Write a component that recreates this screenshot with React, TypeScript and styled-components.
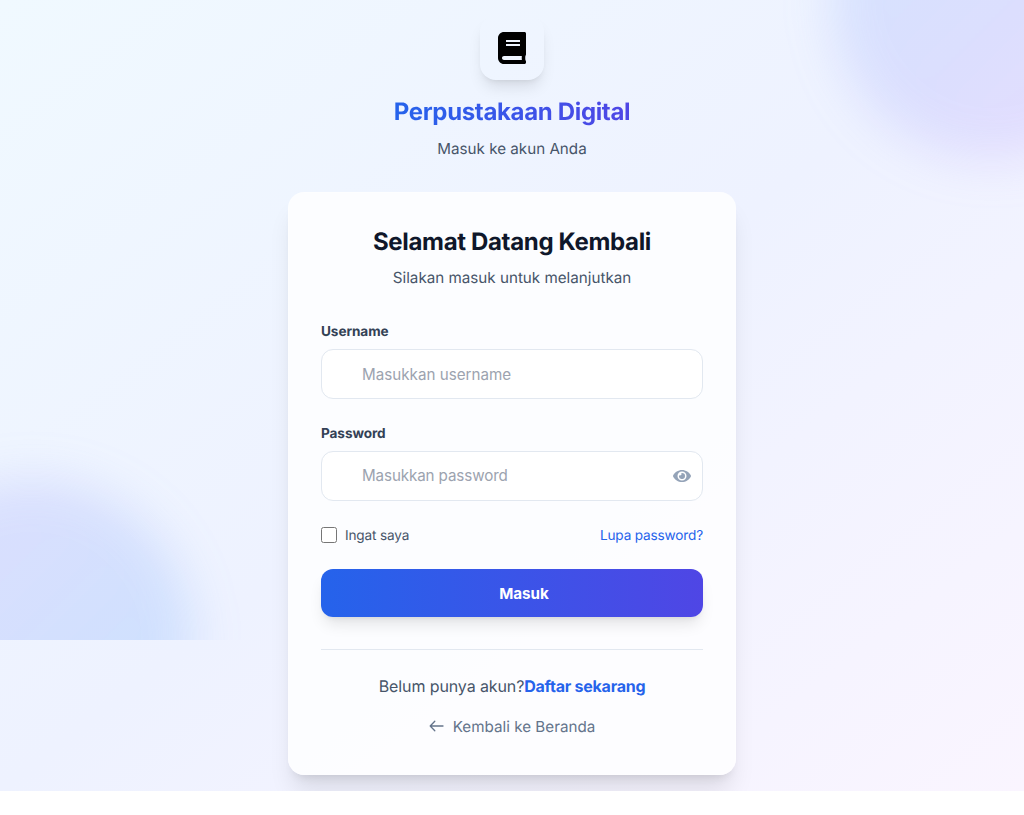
import React, { useState } from "react";
import styled, { createGlobalStyle } from "styled-components";
import { FaBook, FaEye } from "react-icons/fa";

const GlobalStyle = createGlobalStyle`
  *, *::before, *::after { box-sizing: border-box; }
  body {
    margin: 0;
    background: #fff;
    font-family: Inter, sans-serif;
    font-size: 16px;
    font-weight: 375;
    line-height: 24px;
    color: #0f172a;
    text-rendering: geometricPrecision;
    -webkit-font-smoothing: antialiased;
  }
  h1, h2, p { margin: 0; }
  a { text-decoration: none; }
`;

const Page = styled.div`
  position: relative;
  height: 791px;
  padding: 16px;
  display: flex;
  flex-direction: column;
  align-items: center;
  background: linear-gradient(to bottom right, #f0f9ff, #eef2ff, #faf5ff);
`;

const Backdrop = styled.div`
  position: absolute;
  top: 0;
  left: 0;
  right: 0;
  height: 640px;
  overflow: hidden;
  pointer-events: none;
`;

const Blob = styled.div<{ $corner: "top" | "bottom" }>`
  position: absolute;
  width: 320px;
  height: 320px;
  border-radius: 50%;
  filter: blur(24px);
  ${(p) =>
    p.$corner === "top"
      ? `top: -160px; right: -128px;
         background: linear-gradient(to bottom right, rgba(96, 165, 250, 0.2), rgba(192, 132, 252, 0.2));`
      : `bottom: -160px; left: -128px;
         background: linear-gradient(to bottom right, rgba(129, 140, 248, 0.2) 30%, rgba(88, 156, 250, 0.2) 70%);`}
`;

const Content = styled.main`
  position: relative;
  width: 448px;
`;

const Header = styled.header`
  display: flex;
  flex-direction: column;
  align-items: center;
  margin-bottom: 31px;
`;

const Logo = styled.div`
  display: flex;
  align-items: center;
  justify-content: center;
  width: 64px;
  height: 64px;
  margin-bottom: 16px;
  border-radius: 16px;
  font-size: 32px;
  color: #000;
  box-shadow: 0 10px 15px -3px rgba(0, 0, 0, 0.1), 0 4px 6px -4px rgba(0, 0, 0, 0.1);
`;

const Brand = styled.h1`
  font-size: 24px;
  line-height: 32px;
  font-weight: 700;
  letter-spacing: -0.34px;
  color: transparent;
  background: linear-gradient(to right, #2563eb, #4f46e5);
  background-clip: text;
  -webkit-background-clip: text;
`;

const Subtitle = styled.p`
  margin-top: 9px;
  font-size: 15.2px;
  color: #475569;
`;

const Card = styled.section`
  padding: 32px 32px 35px;
  border: 1px solid rgba(255, 255, 255, 0.2);
  border-radius: 16px;
  background: rgba(255, 255, 255, 0.8);
  box-shadow: 0 20px 25px -5px rgba(0, 0, 0, 0.1), 0 8px 10px -6px rgba(0, 0, 0, 0.1);
`;

const CardHead = styled.div`
  text-align: center;
  margin-bottom: 31px;
`;

const Title = styled.h2`
  padding-top: 1px;
  font-size: 24px;
  line-height: 31px;
  font-weight: 700;
  letter-spacing: -0.34px;
`;

const Form = styled.form`
  display: flex;
  flex-direction: column;
  gap: 24px;
`;

const Field = styled.div`
  display: flex;
  flex-direction: column;
  gap: 7px;
`;

const Label = styled.label`
  padding-top: 1px;
  font-size: 13.6px;
  line-height: 20px;
  font-weight: 650;
  letter-spacing: -0.08px;
  color: #334155;
`;

const InputBox = styled.div`
  display: flex;
  align-items: center;
  height: 50px;
  padding: 0 11px 0 40px;
  border: 1px solid #e2e8f0;
  border-radius: 12px;
  background: rgba(255, 255, 255, 0.8);
`;

const Input = styled.input<{ $drop?: number; $tracking?: number }>`
  flex: 1;
  min-width: 0;
  padding: ${(p) => p.$drop ?? 0}px 0 0;
  border: 0;
  outline: 0;
  background: transparent;
  font: inherit;
  font-size: 15.2px;
  letter-spacing: ${(p) => p.$tracking ?? 0}px;
  color: inherit;
  &::placeholder { color: #9ca3af; opacity: 1; }
`;

const EyeButton = styled.button`
  display: flex;
  padding: 0;
  border: 0;
  background: none;
  font-size: 16px;
  color: #94a3b8;
  svg { width: 18px; height: 16px; }
`;

const Options = styled.div`
  display: flex;
  align-items: center;
  justify-content: space-between;
  height: 20px;
  font-size: 13.6px;
  line-height: 20px;
  letter-spacing: -0.16px;
`;

const Remember = styled.label`
  display: flex;
  align-items: center;
  gap: 8px;
  color: #475569;
  span { padding-top: 2px; }
`;

const Checkbox = styled.input`
  width: 16px;
  height: 16px;
  margin: 0;
`;

const Forgot = styled.a`
  padding-top: 2px;
  color: #2563eb;
`;

const Submit = styled.button`
  height: 48px;
  padding: 2px 0 0 24px;
  border: 0;
  border-radius: 12px;
  font: inherit;
  font-size: 15.2px;
  font-weight: 650;
  color: #fff;
  background: linear-gradient(to right, #2563eb, #4f46e5);
  box-shadow: 0 10px 15px -3px rgba(0, 0, 0, 0.1), 0 4px 6px -4px rgba(0, 0, 0, 0.1);
`;

const Footer = styled.footer`
  display: flex;
  flex-direction: column;
  align-items: center;
  gap: 17px;
  margin-top: 32px;
  padding-top: 24px;
  border-top: 1px solid #e2e8f0;
  letter-spacing: -0.11px;
  color: #475569;
`;

const Register = styled.a`
  font-weight: 650;
  letter-spacing: -0.25px;
  color: #2563eb;
`;

const Back = styled.a`
  display: flex;
  align-items: center;
  gap: 9px;
  font-size: 15.2px;
  letter-spacing: 0.02px;
  color: #64748b;
  svg { margin-top: -2px; }
`;

const ArrowLeft = () => (
  <svg width="15" height="12" viewBox="0 0 15 12" fill="none" stroke="currentColor" strokeWidth="1.3" strokeLinecap="round" strokeLinejoin="round">
    <path d="M14 6H1.2M5.8 1.2 1.2 6l4.6 4.8" />
  </svg>
);

export default function App() {
  const [visible, setVisible] = useState(false);
  return (
    <>
      <GlobalStyle />
      <Page>
        <Backdrop>
          <Blob $corner="top" />
          <Blob $corner="bottom" />
        </Backdrop>
        <Content>
          <Header>
            <Logo><FaBook /></Logo>
            <Brand>Perpustakaan Digital</Brand>
            <Subtitle>Masuk ke akun Anda</Subtitle>
          </Header>
          <Card>
            <CardHead>
              <Title>Selamat Datang Kembali</Title>
              <Subtitle>Silakan masuk untuk melanjutkan</Subtitle>
            </CardHead>
            <Form onSubmit={(e) => e.preventDefault()}>
              <Field>
                <Label htmlFor="username">Username</Label>
                <InputBox>
                  <Input id="username" placeholder="Masukkan username" $drop={2} />
                </InputBox>
              </Field>
              <Field>
                <Label htmlFor="password">Password</Label>
                <InputBox>
                  <Input
                    id="password"
                    type={visible ? "text" : "password"}
                    placeholder="Masukkan password"
                    $tracking={-0.12}
                  />
                  <EyeButton type="button" onClick={() => setVisible(!visible)}><FaEye /></EyeButton>
                </InputBox>
              </Field>
              <Options>
                <Remember><Checkbox type="checkbox" /><span>Ingat saya</span></Remember>
                <Forgot href="#">Lupa password?</Forgot>
              </Options>
              <Submit type="submit">Masuk</Submit>
            </Form>
            <Footer>
              <p>Belum punya akun?<Register href="#">Daftar sekarang</Register></p>
              <Back href="#"><ArrowLeft /><span>Kembali ke Beranda</span></Back>
            </Footer>
          </Card>
        </Content>
      </Page>
    </>
  );
}
